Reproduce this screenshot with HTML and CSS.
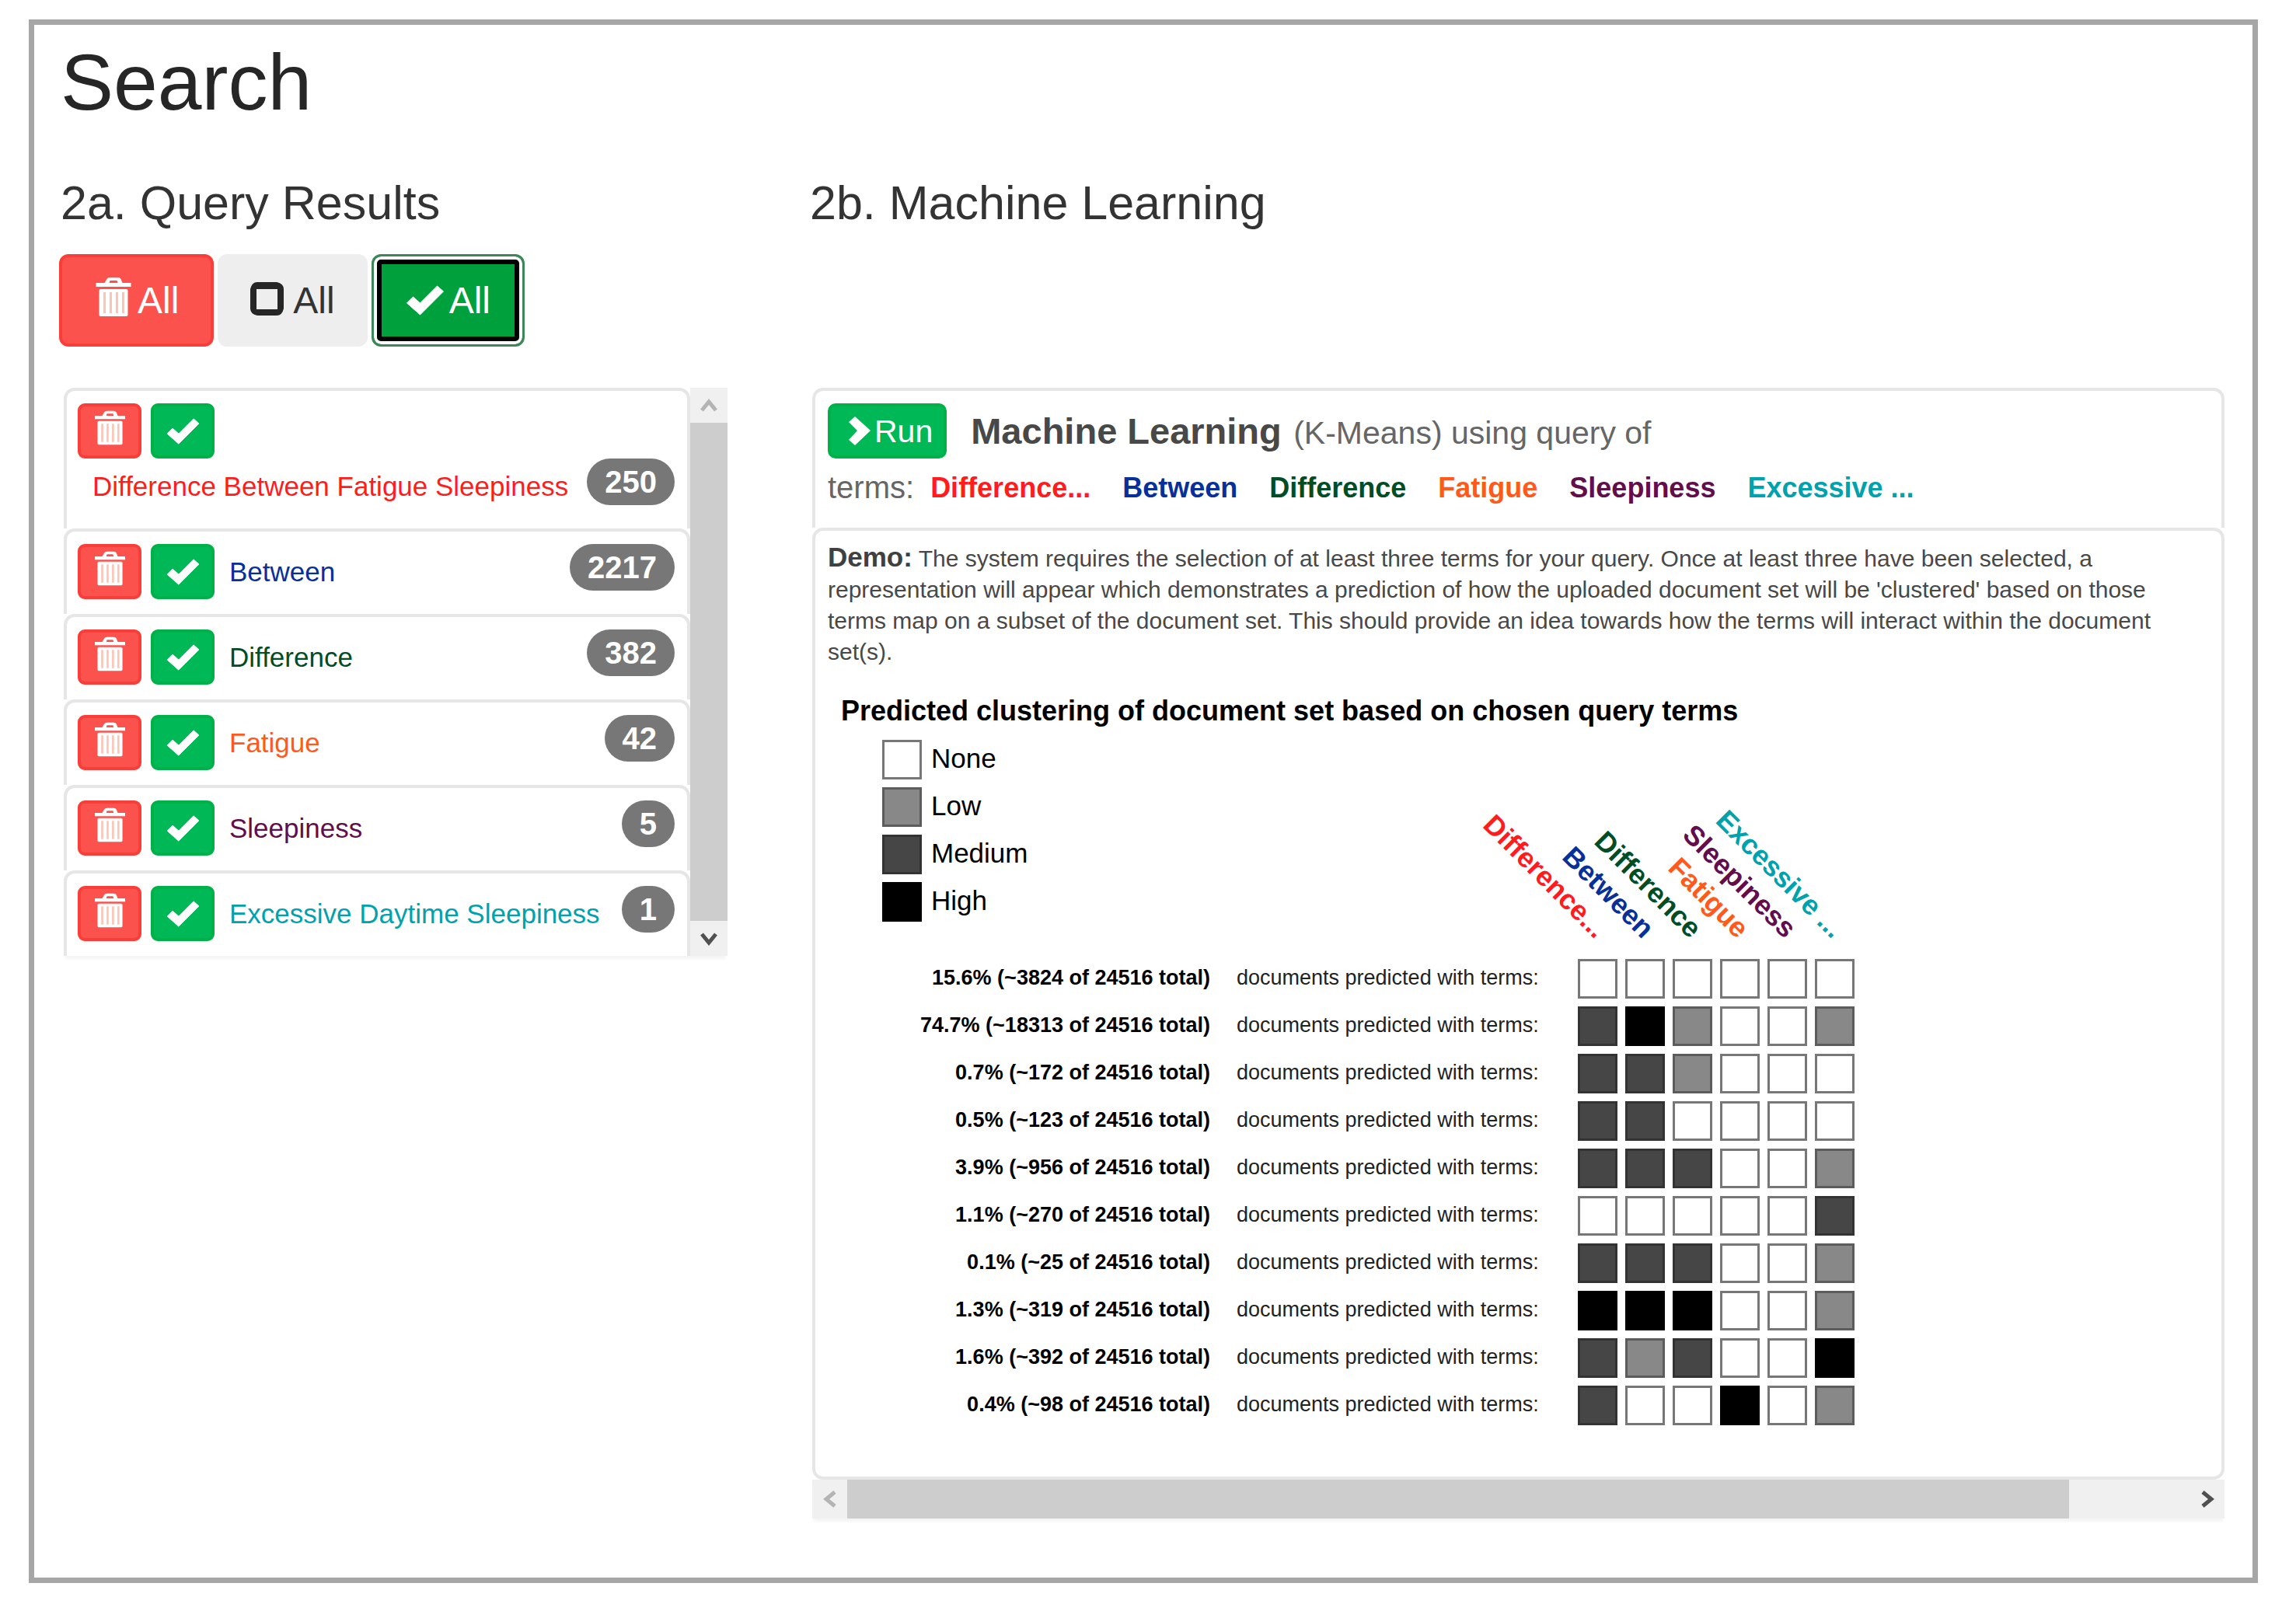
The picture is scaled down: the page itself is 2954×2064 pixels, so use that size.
FILE: index.html
```html
<!DOCTYPE html>
<html lang="en">
<head>
    <meta charset="UTF-8">
    <meta name="viewport" content="width=device-width, initial-scale=1.0">
    <title>Search</title>
    <link rel="stylesheet" href="styles.css">
</head>
<body>
    <!-- Shared icons -->
    <svg class="icon-defs" width="0" height="0" aria-hidden="true">
        <symbol id="icon-trash" viewBox="0 0 45 50">
            <path d="M0 7h11l3-5q1-2 4-2h10q3 0 4 2l2 5h11v5H0zM17 7h11l-1-3h-9z" fill="#fff" fill-rule="evenodd"/>
            <rect x="4" y="15" width="37" height="35" rx="2" fill="#fff"/>
            <path d="M11 19v27M19 19v27M27 19v27M35 19v27" stroke="#fcc4b4" stroke-width="3"/>
        </symbol>
        <symbol id="icon-check" viewBox="0 0 49 39">
            <path d="M1 23l8-8 9 8L40 1l8 7-30 30z" fill="#fff" stroke="#fff" stroke-width="1" stroke-linejoin="round"/>
        </symbol>
        <symbol id="icon-square" viewBox="0 0 43 43">
            <path d="M9 0h25q9 2 9 9v25q-2 9-9 9H9q-9-2-9-9V9q2-9 9-9zM8 9v26h27V9z" fill="#262626" fill-rule="evenodd"/>
        </symbol>
        <symbol id="icon-right" viewBox="0 0 28 37">
            <path d="M8 0l20 18L8 37l-8-7 11-12L0 7z" fill="#fff"/>
        </symbol>
        <symbol id="icon-arrow" viewBox="0 0 22 18">
            <path d="M2 15l9-11 9 11" fill="none" stroke="currentColor" stroke-width="5"/>
        </symbol>
    </svg>

    <main class="frame">
        <h1>Search</h1>
        <div class="columns">
            <h2>2a. Query Results</h2>
            <h2>2b. Machine Learning</h2>

            <div class="toolbar">
                <button type="button" class="btn btn-danger"><svg class="icon-lg icon-lg-trash"><use href="#icon-trash"/></svg>All</button>
                <button type="button" class="btn btn-default"><svg class="icon-box"><use href="#icon-square"/></svg>All</button>
                <button type="button" class="btn btn-focus"><svg class="icon-lg icon-lg-check"><use href="#icon-check"/></svg>All</button>
            </div>

            <section class="results">
                <ul class="result-list" id="result-list">
                    <!-- Rows are added by the script below -->
                </ul>
                <div class="scroll-y">
                    <button type="button" class="scroll-btn off" aria-label="Up"><svg><use href="#icon-arrow"/></svg></button>
                    <div class="thumb"></div>
                    <button type="button" class="scroll-btn down" aria-label="Down"><svg><use href="#icon-arrow"/></svg></button>
                </div>
            </section>

            <section class="learning">
                <div class="panel panel-head">
                    <div class="run-row">
                        <button type="button" class="btn-run"><svg><use href="#icon-right"/></svg>Run</button>
                        <h3><strong>Machine Learning</strong> (K-Means) using query of</h3>
                    </div>
                    <div class="terms">
                        <span class="terms-label">terms:</span>
                        <b class="c-red">Difference...</b>
                        <b class="c-blue">Between</b>
                        <b class="c-green">Difference</b>
                        <b class="c-orange">Fatigue</b>
                        <b class="c-purple">Sleepiness</b>
                        <b class="c-teal">Excessive ...</b>
                    </div>
                </div>
                <div class="panel panel-body">
                    <p class="demo"><b>Demo:</b> The system requires the selection of at least three terms for your query. Once at least three have been selected, a representation will appear which demonstrates a prediction of how the uploaded document set will be 'clustered' based on those terms map on a subset of the document set. This should provide an idea towards how the terms will interact within the document set(s).</p>
                    <h4>Predicted clustering of document set based on chosen query terms</h4>
                    <table class="clusters">
                        <thead>
                            <tr>
                                <td class="legend-cell" colspan="2">
                                    <ul class="legend">
                                        <li><i class="box none"></i>None</li>
                                        <li><i class="box low"></i>Low</li>
                                        <li><i class="box medium"></i>Medium</li>
                                        <li><i class="box high"></i>High</li>
                                    </ul>
                                </td>
                                <th class="c-red"><div><span>Difference...</span></div></th>
                                <th class="c-blue"><div><span>Between</span></div></th>
                                <th class="c-green"><div><span>Difference</span></div></th>
                                <th class="c-orange"><div><span>Fatigue</span></div></th>
                                <th class="c-purple"><div><span>Sleepiness</span></div></th>
                                <th class="c-teal"><div><span>Excessive ...</span></div></th>
                            </tr>
                        </thead>
                        <tbody id="cluster-rows">
                            <!-- Rows are added by the script below -->
                        </tbody>
                    </table>
                </div>
                <div class="scroll-x">
                    <button type="button" class="scroll-btn left off" aria-label="Left"><svg><use href="#icon-arrow"/></svg></button>
                    <div class="track"><div class="thumb"></div></div>
                    <button type="button" class="scroll-btn right" aria-label="Right"><svg><use href="#icon-arrow"/></svg></button>
                </div>
            </section>
        </div>
    </main>

    <script>
        const results = [
            ['Difference Between Fatigue Sleepiness', 250, 'c-red'],
            ['Between', 2217, 'c-blue'],
            ['Difference', 382, 'c-green'],
            ['Fatigue', 42, 'c-orange'],
            ['Sleepiness', 5, 'c-purple'],
            ['Excessive Daytime Sleepiness', 1, 'c-teal']
        ];

        // Levels: 0 none, 1 low, 2 medium, 3 high
        const levels = ['none', 'low', 'medium', 'high'];
        const clusters = [
            ['15.6%', 3824, [0, 0, 0, 0, 0, 0]],
            ['74.7%', 18313, [2, 3, 1, 0, 0, 1]],
            ['0.7%', 172, [2, 2, 1, 0, 0, 0]],
            ['0.5%', 123, [2, 2, 0, 0, 0, 0]],
            ['3.9%', 956, [2, 2, 2, 0, 0, 1]],
            ['1.1%', 270, [0, 0, 0, 0, 0, 2]],
            ['0.1%', 25, [2, 2, 2, 0, 0, 1]],
            ['1.3%', 319, [3, 3, 3, 0, 0, 1]],
            ['1.6%', 392, [2, 1, 2, 0, 0, 3]],
            ['0.4%', 98, [2, 0, 0, 3, 0, 1]]
        ];

        document.getElementById('result-list').innerHTML = results.map(([name, count, color]) => `
            <li>
                <div class="actions">
                    <button type="button" class="btn-sm btn-danger" aria-label="Delete"><svg class="icon-trash"><use href="#icon-trash"/></svg></button>
                    <button type="button" class="btn-sm btn-success" aria-label="Select"><svg class="icon-check"><use href="#icon-check"/></svg></button>
                </div>
                <span class="name ${color}">${name}</span>
                <span class="badge">${count}</span>
            </li>`).join('');

        document.getElementById('cluster-rows').innerHTML = clusters.map(([percent, count, cells]) => `
            <tr>
                <th scope="row">${percent} (~${count} of 24516 total)</th>
                <td class="note">documents predicted with terms:</td>
                ${cells.map(level => `<td><i class="box ${levels[level]}"></i></td>`).join('')}
            </tr>`).join('');
    </script>
</body>
</html>
```
FILE: styles.css
```css
* {
    box-sizing: border-box;
}

body {
    margin: 0;
    background: #fff;
    color: #333;
    font-family: "Liberation Sans", Arial, sans-serif;
}

h1, h2, h3, h4, p, ul {
    margin: 0;
    padding: 0;
    font-weight: normal;
}

ul {
    list-style: none;
}

button {
    margin: 0;
    padding: 0;
    font-family: inherit;
    cursor: pointer;
}

svg {
    display: block;
    flex: none;
}

.icon-defs {
    position: absolute;
}

.frame {
    margin: 25px 49px 27px 37px;
    padding: 14px 36px 70px 32px;
    border: 7px solid #a6a6a6;
    min-height: calc(100vh - 52px);
}

h1 {
    padding-left: 2px;
    font-size: 102px;
    line-height: 120px;
    color: #262626;
}

.columns {
    display: grid;
    grid-template-columns: 860fr 1822fr;
    column-gap: 104px;
    align-items: start;
    margin-top: 59px;
}

h2 {
    padding-left: 2px;
    font-size: 61px;
    line-height: 72px;
}

/* Toolbar */
.toolbar {
    grid-column: 1 / -1;
    display: flex;
    gap: 5px;
    margin: 30px 0 53px;
}

.btn {
    display: flex;
    align-items: center;
    gap: 6px;
    height: 119px;
    padding: 0 41px;
    border: 4px solid transparent;
    border-radius: 12px;
    font-size: 48px;
    line-height: 56px;
    color: #fff;
}

.btn-danger {
    background: #fb524d;
    border: 4px solid #f93d38;
}

.btn-default {
    gap: 12px;
    padding: 0 38px;
    background: #eee;
    border-color: #eee;
    color: #333;
}

.btn-focus {
    background: #00a03c;
    border: 3px solid #3c8858;
    box-shadow: inset 0 0 0 4px #fff, inset 0 0 0 10px #000;
}

.icon-lg {
    width: 50px;
    height: 50px;
}

.icon-lg-trash {
    margin-bottom: 10px;
}

.icon-lg-check {
    height: 39px;
}

.icon-box {
    width: 43px;
    height: 43px;
    margin-bottom: 4px;
}

/* Query results */
.results {
    display: flex;
    margin-left: 6px;
    box-shadow: 0 6px 4px -2px #f4f4f4;
}

.result-list {
    flex: 1;
}

.result-list li {
    display: flex;
    flex-wrap: wrap;
    align-items: flex-start;
    padding: 16px 16px 18px 14px;
    border: 4px solid #e6e6e6;
    border-bottom: 0;
    border-radius: 14px 14px 0 0;
}

.actions {
    display: flex;
    gap: 12px;
}

.btn-sm {
    display: flex;
    align-items: center;
    justify-content: center;
    width: 82px;
    height: 71px;
    border-radius: 9px;
}

.btn-sm .icon-trash {
    width: 39px;
    height: 45px;
    margin-bottom: 8px;
}

.btn-sm .icon-check {
    width: 45px;
    height: 34px;
}

.btn-success,
.btn-run {
    background: #00b956;
    border: 4px solid #00b048;
}

.name {
    margin-left: 19px;
    font-size: 35px;
    line-height: 72px;
}

.badge {
    margin-left: auto;
    padding: 0 23px;
    border-radius: 30px;
    background: #777;
    color: #fff;
    font-size: 40px;
    font-weight: bold;
    line-height: 60px;
}

/* Term colors */
.c-red { color: #ff1c1c; }
.c-blue { color: #08309a; }
.c-green { color: #004d26; }
.c-orange { color: #ff5a1c; }
.c-purple { color: #630d4b; }
.c-teal { color: #00a2ae; }

/* Scrollbars */
.scroll-y {
    display: flex;
    flex-direction: column;
    width: 48px;
    background: #f0f0f0;
}

.scroll-x {
    display: flex;
    height: 50px;
    background: #f0f0f0;
    box-shadow: 0 6px 4px -2px #f4f4f4;
}

.scroll-y .thumb {
    flex: 1;
    background: #cdcdcd;
}

.scroll-x .track {
    flex: 1;
}

.scroll-x .thumb {
    width: 91%;
    height: 100%;
    background: #cdcdcd;
}

.scroll-btn {
    display: flex;
    align-items: center;
    justify-content: center;
    width: 45px;
    height: 45px;
    border: 0;
    background: #f0f0f0;
    color: #505050;
}

.scroll-y .scroll-btn {
    width: 100%;
}

.scroll-x .scroll-btn {
    height: 100%;
}

.scroll-btn svg {
    width: 22px;
    height: 18px;
}

.scroll-btn.off { color: #b4b4b4; }
.down svg { transform: rotate(180deg); }
.left svg { transform: rotate(-90deg); }
.right svg { transform: rotate(90deg); }

/* Machine learning */
.learning {
    margin-left: 5px;
}

.panel {
    border: 4px solid #e6e6e6;
    border-radius: 14px 14px 0 0;
}

.panel-head {
    padding: 16px 16px 14px;
    border-bottom: 0;
}

.panel-body {
    padding: 14px 16px 56px;
    border-radius: 14px;
}

.run-row {
    display: flex;
    align-items: flex-start;
    height: 71px;
}

.btn-run {
    display: flex;
    align-items: center;
    gap: 5px;
    height: 71px;
    padding: 0 14px 0 23px;
    border-radius: 10px;
    font-size: 41px;
    line-height: 60px;
    color: #fff;
}

.btn-run svg {
    width: 28px;
    height: 37px;
}

h3 {
    margin-left: 31px;
    font-size: 41px;
    line-height: 71px;
    color: #666;
}

h3 strong {
    margin-right: 4px;
    font-size: 47px;
    color: #484848;
}

.terms {
    display: flex;
    flex-wrap: wrap;
    column-gap: 41px;
    font-size: 36px;
    line-height: 75px;
}

.terms-label {
    margin-right: -20px;
    font-size: 40px;
    color: #666;
}

.demo {
    font-size: 30px;
    line-height: 40px;
    color: #484848;
}

.demo b {
    font-size: 35px;
    color: #404040;
}

h4 {
    margin: 34px 0 5px 17px;
    font-size: 36px;
    font-weight: bold;
    line-height: 44px;
    color: #000;
}

.clusters {
    margin-left: 60px;
    border-spacing: 10px;
    color: #000;
    font-size: 27px;
    line-height: 48px;
}

.clusters th,
.clusters td {
    height: 51px;
    padding: 0;
    vertical-align: top;
    white-space: nowrap;
}

.clusters tbody th {
    width: 422px;
    text-align: right;
}

.clusters .note {
    width: 453px;
    padding-left: 24px;
    color: #222;
}

.clusters .legend-cell {
    height: 272px;
}

.legend {
    display: flex;
    flex-direction: column;
    gap: 10px;
    font-size: 35px;
    line-height: 48px;
}

.legend li {
    display: flex;
    gap: 12px;
}

.clusters thead th {
    padding-bottom: 7px;
    vertical-align: bottom;
    font-size: 36px;
    line-height: 40px;
}

/* Slanted headings end over the left part of their column */
.clusters thead div {
    display: flex;
    justify-content: flex-end;
    width: 22px;
}

.clusters thead span {
    transform: rotate(45deg);
    transform-origin: 100% 32px;
}

.box {
    display: block;
    width: 51px;
    height: 51px;
    border: 3px solid #777;
}

.none { background: #fff; }
.low { background: #888; border-color: #5c5c5c; }
.medium { background: #464646; border-color: #333; }
.high { background: #000; border-color: #000; }
```
